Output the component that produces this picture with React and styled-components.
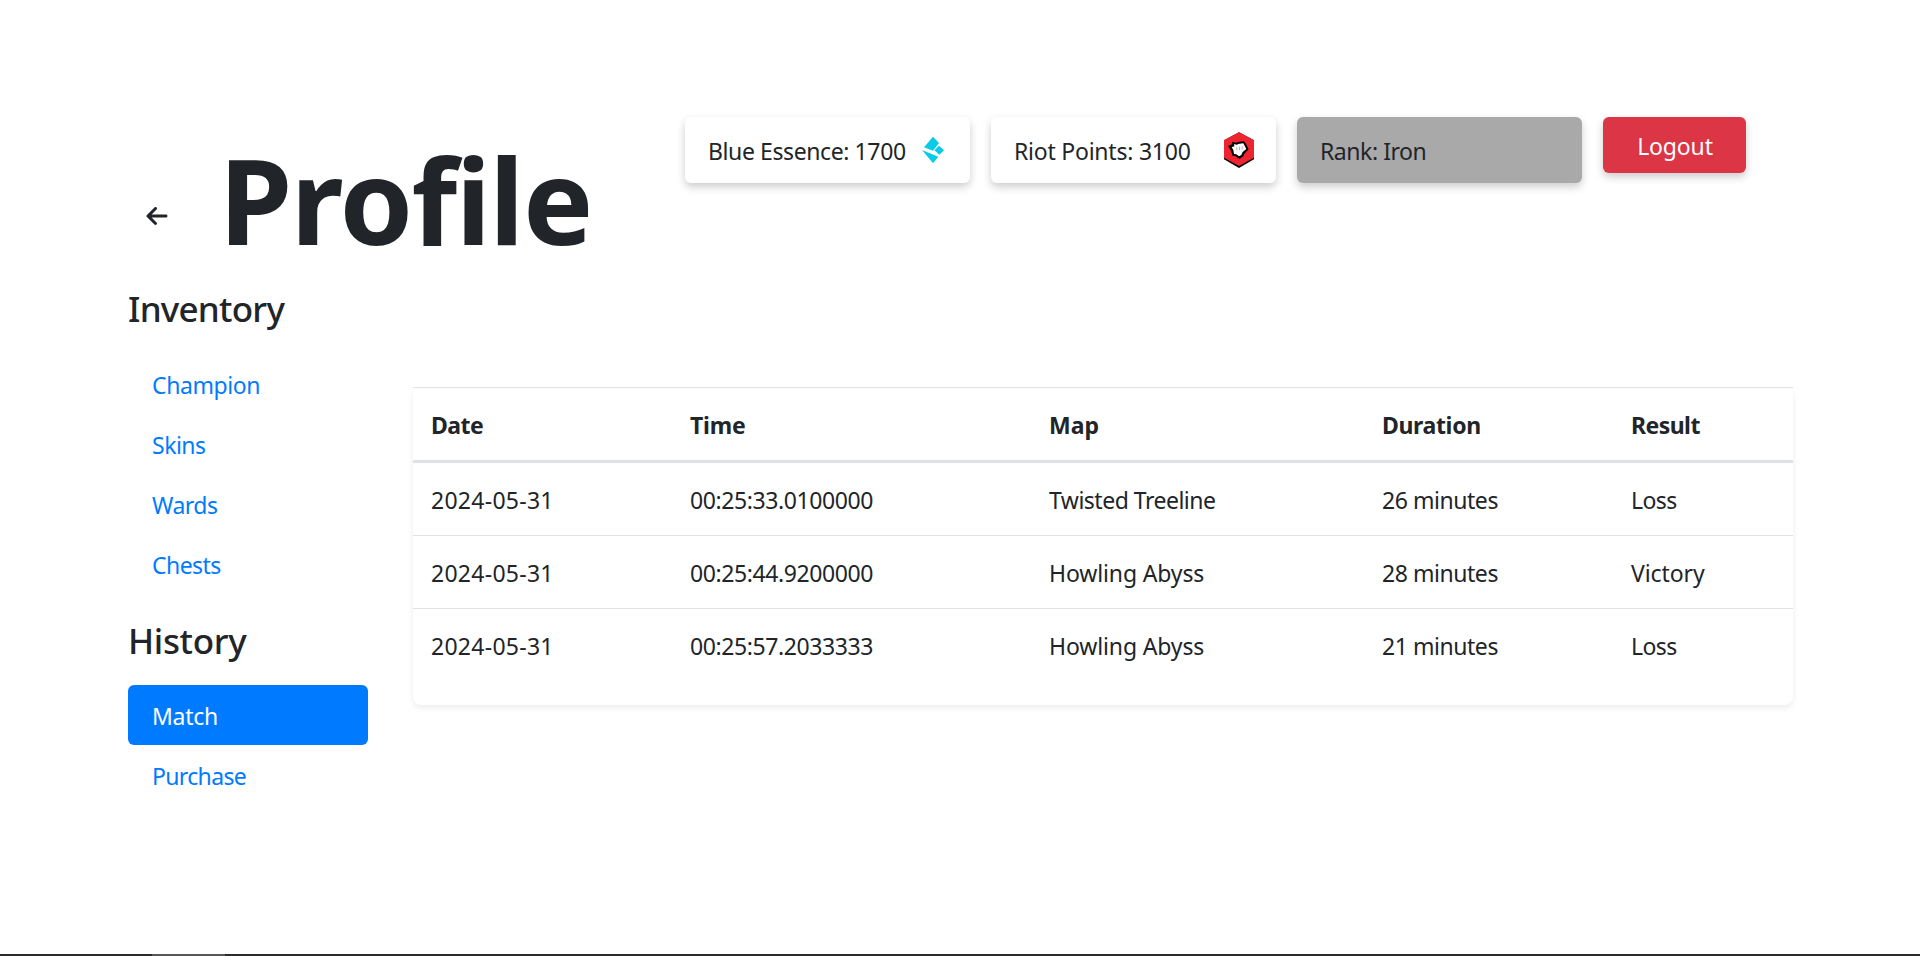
import React from "react";
import styled, { createGlobalStyle } from "styled-components";
import { FaArrowLeft } from "react-icons/fa6";

const GlobalStyle = createGlobalStyle`
  *, *::before, *::after { box-sizing: border-box; }
  body {
    margin: 0;
    background: #fff;
    color: #212529;
    font-family: "Segoe UI", "Noto Sans", "Open Sans", sans-serif;
    font-size: 23px;
    line-height: 36px;
    overflow: hidden;
  }
`;

const Page = styled.div`
  display: flex;
  flex-direction: column;
  height: 956px;
`;

const Header = styled.header`
  display: flex;
  align-items: flex-start;
  padding: 117px 0 0 145px;
  height: 287px;
`;

const BackButton = styled.button`
  display: flex;
  margin: 87px 0 0;
  padding: 0;
  border: 0;
  background: none;
  color: #212529;
  font-size: 24px;
`;

const Title = styled.h1`
  width: 466px;
  margin: 11px 0 0 50px;
  font-size: 118px;
  line-height: 144px;
  font-weight: 700;
  letter-spacing: -1.6px;
`;

const Stats = styled.div`
  display: flex;
  align-items: flex-start;
  gap: 21px;
`;

const StatCard = styled.div`
  display: flex;
  align-items: center;
  justify-content: space-between;
  width: 285px;
  height: 66px;
  padding: 0 ${(p) => p.$end || 22}px 0 23px;
  border-radius: 6px;
  background: ${(p) => p.$bg || "#fff"};
  box-shadow: 0 4px 8px rgba(0, 0, 0, 0.2);
`;

const Label = styled.span`
  padding-top: 2px;
  white-space: nowrap;
  letter-spacing: ${(p) => p.$track || 0}px;
`;

const LogoutButton = styled.button`
  width: 143px;
  height: 56px;
  padding: 2px 0 0 1px;
  border: 0;
  border-radius: 6px;
  background: #dc3545;
  color: #fff;
  font: inherit;
  letter-spacing: -0.15px;
  box-shadow: 0 4px 8px rgba(0, 0, 0, 0.2);
`;

const Body = styled.div`
  display: flex;
  flex: 1;
  padding-left: 128px;
`;

const Sidebar = styled.aside`
  width: 240px;
  margin-right: 45px;
`;

const Heading = styled.h3`
  margin: 0 0 ${(p) => p.$gap}px;
  font-size: 35px;
  line-height: 43px;
  font-weight: 500;
  letter-spacing: ${(p) => p.$track || 0}px;
`;

const NavList = styled.nav`
  display: flex;
  flex-direction: column;
  margin-bottom: ${(p) => p.$gap || 0}px;
`;

const NavItem = styled.a`
  height: 60px;
  padding: 13px 24px 0;
  border-radius: 6px;
  text-decoration: none;
  color: ${(p) => (p.$active ? "#fff" : "#007bff")};
  background: ${(p) => (p.$active ? "#007bff" : "transparent")};
  letter-spacing: ${(p) => p.$track || 0}px;
`;

const TableCard = styled.section`
  width: 1380px;
  height: 318px;
  margin-top: 100px;
  border-radius: 8px;
  background: #fff;
  box-shadow: 0 3px 6px rgba(0, 0, 0, 0.075);
`;

const Row = styled.div`
  display: grid;
  grid-template-columns: 259px 359px 333px 249px 180px;
  height: ${(p) => (p.$head ? 76 : p.$first ? 72 : 73)}px;
  padding-top: 19px;
  border-top: ${(p) => (p.$first ? "0" : "1px solid #dee2e6")};
  border-bottom: ${(p) => (p.$head ? "3px solid #dee2e6" : "0")};
  font-weight: ${(p) => (p.$head ? 700 : 400)};
`;

const Cell = styled.div`
  padding-left: 18px;
  white-space: nowrap;
  letter-spacing: ${(p) => p.$track || 0}px;
`;

const Taskbar = styled.footer`
  height: 2px;
  padding-left: 152px;
  background: #2b2b2b;
`;

const TaskbarItem = styled.div`
  width: 73px;
  height: 2px;
  background: #575757;
`;

const EssenceIcon = () => (
  <svg width="22" height="28" viewBox="0 0 66 84" fill="#0acbe6">
    <path d="M33 2 51 21 33 44 6 34Z" />
    <path d="M51 29 66 43 52 56 37 43Z" />
    <path d="M0 42 49 62 33 82Z" />
  </svg>
);

const RiotIcon = () => (
  <svg width="30" height="36" viewBox="0 0 90 108">
    <path fill="#000" d="M45 1 90 25V82L45 108 0 82V25Z" />
    <path fill="#ee2430" d="M45 1 90 25V77L45 102 0 77V25Z" />
    <path fill="#000" d="M12 42 24 37 25 29 35 32 46 29 60 28 66 36 74 52 61 65 58 73 46 81 35 73 26 71 21 56Z" />
    <path fill="#fff" d="M23 46 31 43 30 36 38 38 46 35 58 34 67 51 56 60 52 69 45 73 37 67 30 66 28 54Z" />
    <path stroke="#888" strokeWidth="2" fill="none" d="M38 46 39 55M46 44 47 55M55 43 54 52" />
  </svg>
);

const inventory = [
  { name: "Champion", track: -0.4 },
  { name: "Skins", track: -0.5 },
  { name: "Wards", track: -0.5 },
  { name: "Chests", track: -0.55 },
];

const history = [
  { name: "Match", track: -0.3, active: true },
  { name: "Purchase", track: -0.65 },
];

const columns = [
  ["Date", -0.5],
  ["Time", -0.2],
  ["Map", 0],
  ["Duration", -0.35],
  ["Result", -0.55],
];

const tracks = { "Twisted Treeline": -0.5, "Howling Abyss": -0.13, Loss: -0.6, Victory: -0.1 };

const matches = [
  ["2024-05-31", "00:25:33.0100000", "Twisted Treeline", "26 minutes", "Loss"],
  ["2024-05-31", "00:25:44.9200000", "Howling Abyss", "28 minutes", "Victory"],
  ["2024-05-31", "00:25:57.2033333", "Howling Abyss", "21 minutes", "Loss"],
].map(([date, time, map, duration, result]) => [
  [date, 0.27],
  [time, -0.4],
  [map, tracks[map]],
  [duration, -0.45],
  [result, tracks[result]],
]);

const Links = ({ items, gap }) => (
  <NavList $gap={gap}>
    {items.map((it) => (
      <NavItem key={it.name} href="#" $active={it.active} $track={it.track}>
        {it.name}
      </NavItem>
    ))}
  </NavList>
);

const Cells = ({ items }) =>
  items.map(([text, track], i) => (
    <Cell key={i} $track={track}>
      {text}
    </Cell>
  ));

export default function App() {
  return (
    <Page>
      <GlobalStyle />
      <Header>
        <BackButton aria-label="Back">
          <FaArrowLeft />
        </BackButton>
        <Title>Profile</Title>
        <Stats>
          <StatCard $end={26}>
            <Label $track={-0.4}>Blue Essence: 1700</Label>
            <EssenceIcon />
          </StatCard>
          <StatCard>
            <Label $track={-0.23}>Riot Points: 3100</Label>
            <RiotIcon />
          </StatCard>
          <StatCard $bg="#a9a9a9">
            <Label $track={-0.45}>Rank: Iron</Label>
          </StatCard>
          <LogoutButton>Logout</LogoutButton>
        </Stats>
      </Header>
      <Body>
        <Sidebar>
          <Heading $gap={24} $track={-0.75}>Inventory</Heading>
          <Links items={inventory} gap={25} />
          <Heading $gap={23} $track={-0.35}>History</Heading>
          <Links items={history} />
        </Sidebar>
        <TableCard>
          <Row $head>
            <Cells items={columns} />
          </Row>
          {matches.map((m, i) => (
            <Row key={i} $first={i === 0}>
              <Cells items={m} />
            </Row>
          ))}
        </TableCard>
      </Body>
      <Taskbar>
        <TaskbarItem />
      </Taskbar>
    </Page>
  );
}
